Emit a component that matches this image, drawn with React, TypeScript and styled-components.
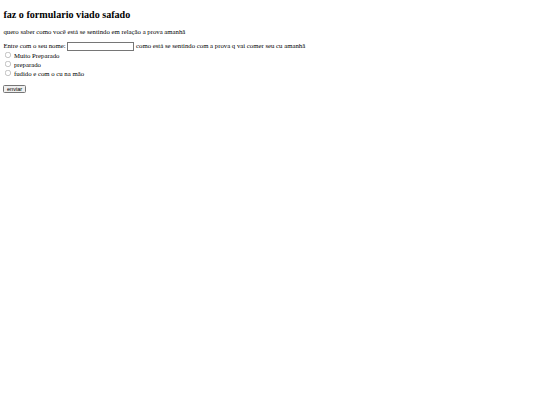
import React from "react";
import styled, { createGlobalStyle } from "styled-components";

// the screenshot is a plain unstyled page of 1280x960 shown at 540x405
const GlobalStyle = createGlobalStyle`
  html {
    zoom: 0.421875;
    background: #fff;
  }
  body {
    margin: 8px;
    font-family: "Liberation Serif", "Times New Roman", serif;
    font-size: 16px;
    color: #000;
  }
`;

const Title = styled.h2`
  font-size: 1.5em;
  font-weight: bold;
  margin: 13px 0 0.83em;
`;

const Intro = styled.p`
  margin: 1em 0;
`;

const Form = styled.form`
  display: block;
`;

const NameInput = styled.input`
  box-sizing: border-box;
  width: 159px;
  font-family: Arial, "Liberation Sans", sans-serif;
  font-size: 13.333px;
`;

const Option = styled.label`
  display: block;
  line-height: 19.5px;
`;

const Radio = styled.input`
  margin: 3px 3px 0 5px;
`;

const ButtonRow = styled.p`
  margin: 1em 0;
`;

const Send = styled.button`
  font-family: Arial, "Liberation Sans", sans-serif;
  font-size: 13.333px;
`;

const OPTIONS = ["Muito Preparado", "preparado", "fudido e com o cu na mão"];

const App: React.FC = () => {
  const [nome, setNome] = React.useState("");
  const [estado, setEstado] = React.useState("");
  const onSubmit = (e: React.FormEvent) => {
    e.preventDefault();
    console.log({ nome, estado });
  };
  return <>
    <GlobalStyle />
    <Title>faz o formulario viado safado</Title>
    <Intro>quero saber como você está se sentindo em relação a prova amanhã</Intro>
    <Form onSubmit={onSubmit}>
      Entre com o seu nome: <NameInput type="text" value={nome} onChange={e => setNome(e.target.value)} /> como está se sentindo com a prova q vai comer seu cu amanhã
      {OPTIONS.map(op => (
        <Option key={op}>
          <Radio type="radio" name="estado" value={op} checked={estado === op} onChange={() => setEstado(op)} /> {op}
        </Option>
      ))}
      <ButtonRow>
        <Send type="submit">enviar</Send>
      </ButtonRow>
    </Form>
  </>;
};

export default App;
